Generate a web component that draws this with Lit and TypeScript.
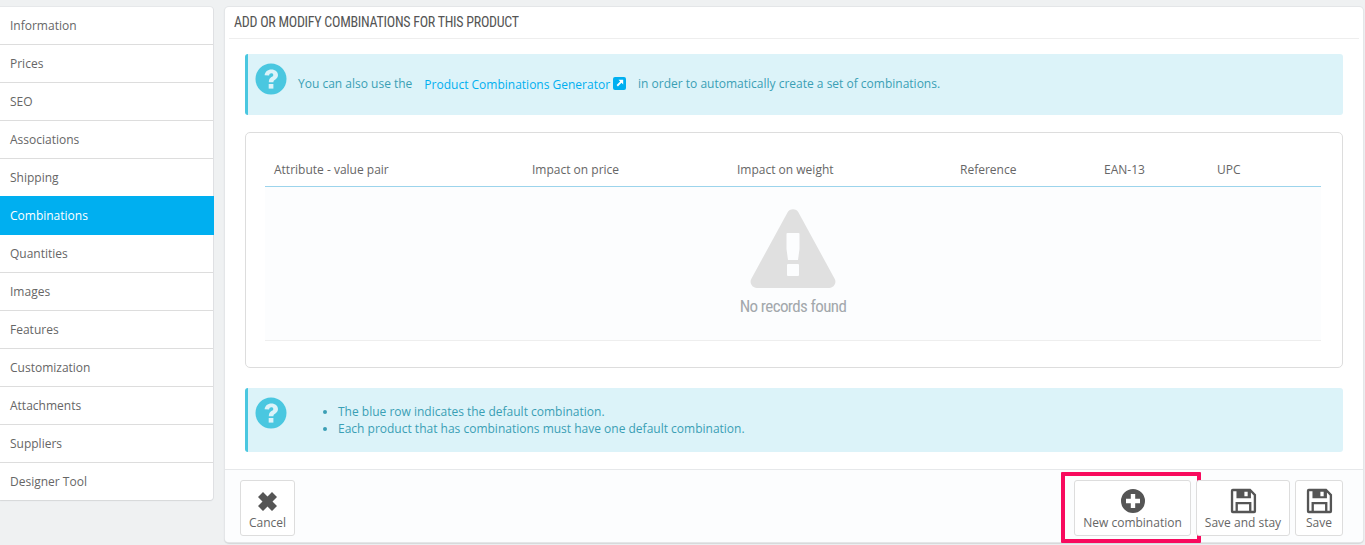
import { LitElement, html, css, svg } from "lit";
import { customElement } from "lit/decorators.js";

const tabs = ["Information","Prices","SEO","Associations","Shipping","Combinations","Quantities","Images","Features","Customization","Attachments","Suppliers","Designer Tool"];
const cols: [string, number][] = [["Attribute - value pair",258],["Impact on price",205],["Impact on weight",223],["Reference",144],["EAN-13",113],["UPC",104]];

const question = html`<svg class="q" viewBox="0 0 32 32"><circle cx="16" cy="16" r="15.5" fill="#4ac7e0"/><path d="M9.600 12.200C10 8.600 12.600 6.400 16.400 6.400c3.800 0 6.600 2.300 6.600 5.600 0 2.400-1.300 3.600-2.900 4.700-1.200.8-1.700 1.300-1.700 2.600h-4.600c0-2.800.9-4 2.600-5.200 1.100-.8 1.900-1.200 1.900-2.200 0-1-.8-1.600-1.900-1.600-1.300 0-2.100.8-2.300 2.300z" fill="#dcf3f9"/><rect x="13.700" y="21" width="4.700" height="4.600" fill="#dcf3f9"/></svg>`;
const floppy = svg`<path fill-rule="evenodd" d="M3 1h19l6 6v18a2 2 0 0 1-2 2H3a2 2 0 0 1-2-2V3a2 2 0 0 1 2-2zM3.500 3.500v21h2.500V15h17v9.500h2.500V8l-3-3v6H7V3.500zM8.500 17.500v7h12v-7zM15.500 4h3.500v5h-3.500z" fill="#555"/>`;

@customElement("app-root")
export class AppRoot extends LitElement {
  static styles = css`
    :host { display: block; width: 1365px; height: 545px; background: #eff1f2; overflow: hidden;
      font: 12px/17px "Open Sans", sans-serif; color: #666; }
    .page { display: flex; gap: 12px; align-items: flex-start; padding-top: 7px; }
    .side { flex: none; width: 213px; box-sizing: border-box; background: #fff; border-radius: 0 3px 3px 0;
      box-shadow: 0 1px 1px #d5d7d9, 1px 0 0 #e0e2e4, 0 -1px 0 #e6e8ea; }
    .tab { height: 38px; box-sizing: border-box; padding: 10px 10px 0; border-bottom: 1px solid #ddd; color: #666; }
    .tab:last-child { border-bottom: 0; height: 37px; }
    .tab.on { background: #00aff0; color: #fff; border-bottom: 0; height: 39px; margin: -1px -1px 0 0; padding-top: 11px; position: relative; }
    .card { flex: none; width: 1138px; height: 535px; box-sizing: border-box; background: #fff; border-radius: 4px;
      box-shadow: 0 0 0 1px #e4e6e8, 0 1px 1px 1px #d5d7d9; display: flex; flex-direction: column; }
    .head { height: 32px; margin: 0 4px 0 4px; box-sizing: border-box; padding: 6px 5px 0; border-bottom: 1px solid #eee;
      font: 14px/18px "Liberation Sans Narrow", "Roboto Condensed", sans-serif; letter-spacing: -0.27px; color: #555; text-transform: uppercase; }
    .alert { margin: 15px 20px 0 20px; background: #dcf3f9; border-left: 3px solid #4ac7e0; border-radius: 3px;
      color: #3a9fb5; display: flex; box-sizing: border-box; }
    .q { width: 32px; height: 32px; flex: none; margin: 9px 0 0 7px; }
    .a1 { height: 61px; }
    .a1 .msg { margin: 21px 0 0 11px; white-space: pre; display: flex; }
    .a1 a { color: #00aff0; margin: 1px 0 0 12px; display: flex; align-items: flex-start; text-decoration: none; }
    .ext { width: 13px; height: 13px; margin: 1px 0 0 3px; }
    .a1 .after { margin-left: 12px; }
    .well { margin: 17px 20px 0; height: 236px; box-sizing: border-box; border: 1px solid #ddd; border-radius: 5px; padding: 21px 21px 0 19px; }
    .thead { display: flex; height: 33px; box-sizing: border-box; padding: 7px 0 0 9px; border-bottom: 1px solid #9cd4ec; color: #666; }
    .empty { height: 154px; box-sizing: border-box; background: #fcfdfe; border-bottom: 1px solid #eee;
      display: flex; flex-direction: column; align-items: center; padding-top: 23px; }
    .warn { width: 86px; height: 80px; display: block; margin-top: -1px; }
    .none { font: 17px/20px "Liberation Sans Narrow", "Roboto Condensed", sans-serif; letter-spacing: -0.6px; color: #a3a8ac; margin-top: 7px; }
    .a2 { height: 64px; margin-top: 20px; }
    .a2 ul { margin: 15px 0 0 26px; padding: 0 0 0 25px; list-style: disc; }
    .foot { margin-top: auto; height: 73px; box-sizing: border-box; border-top: 1px solid #e6e8ea; background: #fcfdfe;
      border-radius: 0 0 4px 4px; padding: 10px 20px 0 15px; display: flex; gap: 5px; }
    .btn { height: 56px; box-sizing: border-box; background: #fff; border: 1px solid #ddd; border-radius: 3px; color: #666;
      display: flex; flex-direction: column; align-items: center; padding-top: 6px; position: relative; }
    .btn svg { width: 28px; height: 28px; display: block; flex: none; }
    .btn span { display: block; margin-top: -1px; }
    .cancel { width: 55px; margin-right: auto; }
    .new { width: 117px; }
    .stay { width: 94px; }
    .save { width: 48px; }
    .mark { position: absolute; left: -14px; top: -9px; width: 140px; height: 71px; box-sizing: border-box;
      border: 4px solid #f80a5e; border-radius: 1px; }
  `;
  render() {
    return html`<div class="page">
      <nav class="side">${tabs.map(t => html`<div class="tab ${t === "Combinations" ? "on" : ""}">${t}</div>`)}</nav>
      <section class="card">
        <div class="head">Add or modify combinations for this product</div>
        <div class="alert a1">${question}
          <div class="msg"><span>You can also use the</span>
            <a>Product Combinations Generator<svg class="ext" viewBox="0 0 13 13"><rect width="13" height="13" rx="2" fill="#00aff0"/><path d="M5.500 2.800h4.700v4.700L8.500 5.800l-3.600 3.600-1.300-1.300 3.600-3.600z" fill="#fff"/></svg></a>
            <span class="after">in order to automatically create a set of combinations.</span></div>
        </div>
        <div class="well">
          <div class="thead">${cols.map(([c, w]) => html`<div style="width:${w}px">${c}</div>`)}</div>
          <div class="empty">
            <svg class="warn" viewBox="0 0 86 80"><path fill-rule="evenodd" d="M37.500 3.500a6.300 6.300 0 0 1 11 0l36 66a6.300 6.300 0 0 1-5.500 9.500H7a6.300 6.300 0 0 1-5.500-9.500zM36.500 25v15l1.500 11h10l1.500-11V25a1 1 0 0 0-1-1h-11a1 1 0 0 0-1 1zM38 55a1 1 0 0 0-1 1v10a1 1 0 0 0 1 1h10a1 1 0 0 0 1-1V56a1 1 0 0 0-1-1z" fill="#e0e0e0"/></svg>
            <div class="none">No records found</div>
          </div>
        </div>
        <div class="alert a2">${question}
          <ul><li>The blue row indicates the default combination.</li><li>Each product that has combinations must have one default combination.</li></ul>
        </div>
        <div class="foot">
          <div class="btn cancel"><svg viewBox="0 0 28 28"><path d="M9 5 13.500 9.500 18 5l5 5-4.500 4.500L23 19l-5 5-4.500-4.500L9 24l-5-5 4.500-4.500L4 10z" fill="#555"/></svg><span>Cancel</span></div>
          <div class="btn new"><svg viewBox="0 0 28 28"><path fill-rule="evenodd" d="M14 2a12 12 0 1 1 0 24 12 12 0 0 1 0-24zM11.800 7v4.800H7v4.400h4.800V21h4.400v-4.800H21v-4.400h-4.800V7z" fill="#555"/></svg><span>New combination</span><i class="mark"></i></div>
          <div class="btn stay"><svg viewBox="-1 -1 30 30">${floppy}</svg><span>Save and stay</span></div>
          <div class="btn save"><svg viewBox="-1 -1 30 30">${floppy}</svg><span>Save</span></div>
        </div>
      </section>
    </div>`;
  }
}
